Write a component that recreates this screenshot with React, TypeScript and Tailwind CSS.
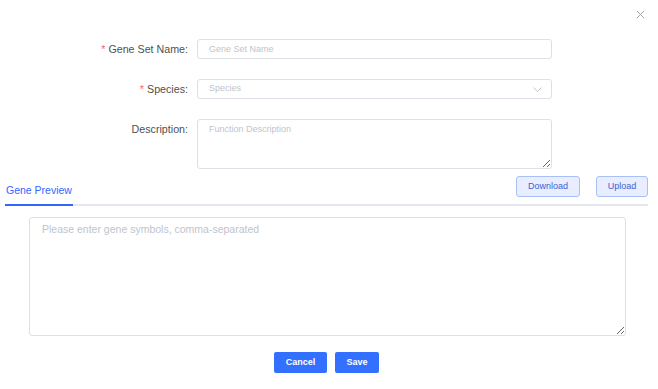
import React, { useState } from "react";

const font = "font-['Liberation_Sans',Arial,sans-serif]";

const FormRow: React.FC<{ label: string; required?: boolean; top?: boolean; children: React.ReactNode }> = ({
  label,
  required,
  top,
  children,
}) => (
  <div className={`flex ${top ? "items-start" : "items-center"}`}>
    <label className="w-[188px] shrink-0 text-right text-[10.7px] leading-[20px] text-[#505050]">
      {required && <span className="text-[#f56c6c] mr-[3px]">*</span>}
      {label}
    </label>
    <div className="ml-[9px] w-[355px]">{children}</div>
  </div>
);

export default function App() {
  const [name, setName] = useState("");
  const [desc, setDesc] = useState("");
  const [genes, setGenes] = useState("");

  return (
    <div className={`relative w-[658px] h-[389px] bg-white ${font}`}>
      {/* close */}
      <button className="absolute right-[13px] top-[10px] w-[9px] h-[9px] text-[#a0a3a8]">
        <svg viewBox="0 0 10 10" width="9" height="9" stroke="currentColor" strokeWidth="1.1" fill="none">
          <path d="M1 1L9 9M9 1L1 9" />
        </svg>
      </button>

      <div className="pt-[39px] flex flex-col gap-[20px]">
        <FormRow label="Gene Set Name:" required>
          <input
            value={name}
            onChange={(e) => setName(e.target.value)}
            placeholder="Gene Set Name"
            className="block w-full h-[20px] px-[11px] border border-[#dcdfe6] rounded-[3px] text-[9px] text-[#333] placeholder:text-[#c0c4cc] outline-none"
          />
        </FormRow>

        <FormRow label="Species:" required>
          <div className="w-full h-[20px] pl-[11px] pr-[9px] border border-[#dcdfe6] rounded-[3px] flex items-center justify-between">
            <span className="text-[9px] text-[#c0c4cc]">Species</span>
            <svg width="9" height="5" viewBox="0 0 9 5" fill="none" stroke="#c0c4cc" strokeWidth="1">
              <path d="M0.5 0.5L4.5 4.5L8.5 0.5" />
            </svg>
          </div>
        </FormRow>

        <FormRow label="Description:" top>
          <textarea
            value={desc}
            onChange={(e) => setDesc(e.target.value)}
            placeholder="Function Description"
            className="block w-full h-[50px] px-[11px] pt-[3px] border border-[#dcdfe6] rounded-[3px] text-[9px] leading-[13px] text-[#333] placeholder:text-[#c0c4cc] outline-none"
          />
        </FormRow>
      </div>

      {/* tabs header */}
      <div className="mt-[7px] ml-[5px] w-[643px] flex items-end justify-between border-b-2 border-[#e4e7ed]">
        <div className="-mb-[2px] border-b-2 border-[#3366ff] px-[1px] pb-[7px] text-[10.5px] leading-[14px] text-[#3366ff]">
          Gene Preview
        </div>
        <div className="flex gap-[16px] mb-[7px]">
          <button className="w-[64px] h-[21px] rounded-[3px] border border-[#a9c0f7] bg-[#e8eeff] text-[9px] text-[#3d62d2]">
            Download
          </button>
          <button className="w-[52px] h-[21px] rounded-[3px] border border-[#a9c0f7] bg-[#e8eeff] text-[9px] text-[#3d62d2]">
            Upload
          </button>
        </div>
      </div>

      <div className="mt-[11px] ml-[29px] w-[597px]">
        <textarea
          value={genes}
          onChange={(e) => setGenes(e.target.value)}
          placeholder="Please enter gene symbols, comma-separated"
          className="block w-full h-[119px] px-[12px] pt-[3px] border border-[#dcdfe6] rounded-[3px] text-[10.5px] leading-[16px] text-[#333] placeholder:text-[#c0c4cc] outline-none"
        />
      </div>

      <div className="mt-[16px] flex justify-center gap-[8px] pr-[5px]">
        <button className="w-[53px] h-[21px] rounded-[2px] bg-[#3370ff] text-white text-[9px] font-bold">
          Cancel
        </button>
        <button className="w-[44px] h-[21px] rounded-[2px] bg-[#3370ff] text-white text-[9px] font-bold">
          Save
        </button>
      </div>
    </div>
  );
}
